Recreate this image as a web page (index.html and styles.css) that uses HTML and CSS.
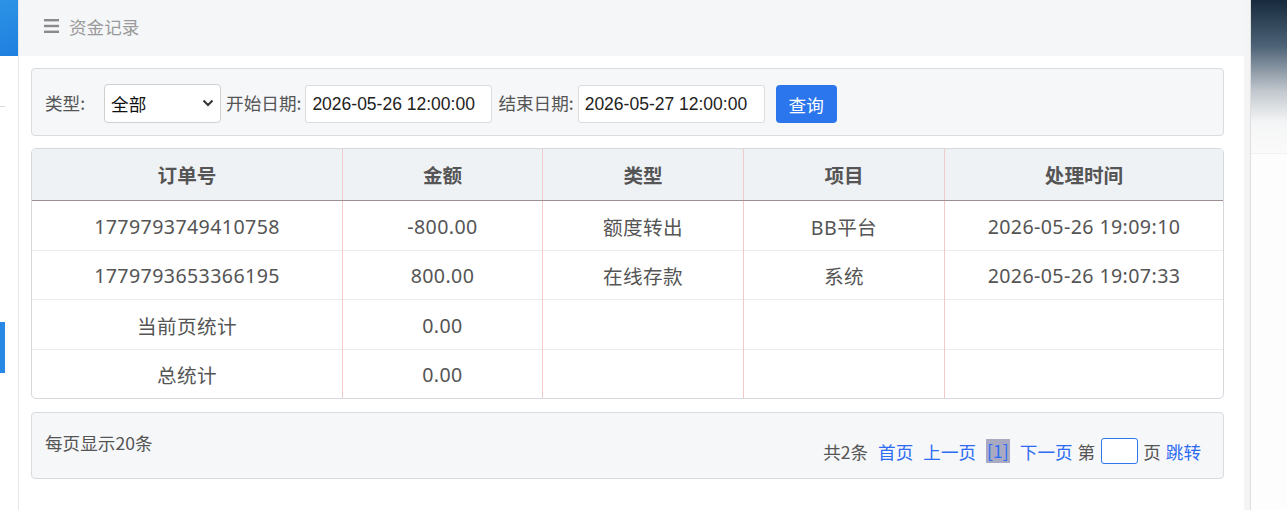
FILE: index.html
```html
<!DOCTYPE html>
<html>
<head>
    <title>资金记录</title>
    <link rel="stylesheet" href="styles.css">
</head>
<body>
    <div class="side">
        <div class="side-top"></div>
        <div class="side-line"></div>
        <div class="side-active"></div>
    </div>

    <div class="main">
        <div class="header">
            <svg class="menu-icon" width="15" height="14" viewBox="0 0 15 14">
                <rect x="0" y="0" width="15" height="2.4" fill="#8a8a8a"/>
                <rect x="0" y="5.8" width="15" height="2.4" fill="#8a8a8a"/>
                <rect x="0" y="11.6" width="15" height="2.4" fill="#8a8a8a"/>
            </svg>
            <span class="title">资金记录</span>
        </div>

        <div class="content">
            <div class="panel filter">
                <label class="lbl lbl-type">类型:</label>
                <div class="select-box">
                    <span>全部</span>
                    <svg width="12" height="8" viewBox="0 0 12 8"><path d="M1.5 1.5 L6 6 L10.5 1.5" fill="none" stroke="#333" stroke-width="2"/></svg>
                </div>
                <label class="lbl">开始日期:</label>
                <input class="date" type="text" value="2026-05-26 12:00:00">
                <label class="lbl">结束日期:</label>
                <input class="date" type="text" value="2026-05-27 12:00:00">
                <button class="btn">查询</button>
            </div>

            <div class="table-wrap">
                <table>
                    <thead>
                        <tr>
                            <th class="c1">订单号</th>
                            <th class="c2">金额</th>
                            <th class="c3">类型</th>
                            <th class="c4">项目</th>
                            <th class="c5">处理时间</th>
                        </tr>
                    </thead>
                    <tbody>
                        <tr>
                            <td>1779793749410758</td>
                            <td>-800.00</td>
                            <td>额度转出</td>
                            <td>BB平台</td>
                            <td>2026-05-26 19:09:10</td>
                        </tr>
                        <tr>
                            <td>1779793653366195</td>
                            <td>800.00</td>
                            <td>在线存款</td>
                            <td>系统</td>
                            <td>2026-05-26 19:07:33</td>
                        </tr>
                        <tr>
                            <td>当前页统计</td>
                            <td>0.00</td>
                            <td></td>
                            <td></td>
                            <td></td>
                        </tr>
                        <tr>
                            <td>总统计</td>
                            <td>0.00</td>
                            <td></td>
                            <td></td>
                            <td></td>
                        </tr>
                    </tbody>
                </table>
            </div>

            <div class="panel pager">
                <div class="per-page">每页显示20条</div>
                <div class="pages">
                    <span>共2条</span>
                    <a href="#">首页</a>
                    <a href="#">上一页</a>
                    <span class="cur">[1]</span>
                    <a href="#">下一页</a>
                    <span class="tight">第</span>
                    <input class="page-input" type="text">
                    <span class="tight">页</span>
                    <a href="#" class="tight">跳转</a>
                </div>
            </div>
        </div>
    </div>

    <div class="gutter"></div>
    <div class="rside">
        <div class="rside-top"></div>
    </div>
</body>
</html>
```

FILE: styles.css
```css
body {
    margin: 0;
    padding: 0;
    width: 1287px;
    height: 510px;
    display: flex;
    font-family: "Noto Sans", "Noto Sans CJK SC", sans-serif;
    background-color: #fff;
    overflow: hidden;
}

.side {
    width: 18px;
    flex-shrink: 0;
    border-right: 1px solid #e6e6e6;
    display: flex;
    flex-direction: column;
}

.side-top {
    height: 56px;
    background: linear-gradient(160deg, #2c93e6, #1f7fdf);
}

.side-line {
    width: 5px;
    height: 1px;
    background-color: #d8d8d8;
    margin-top: 50px;
}

.side-active {
    width: 5px;
    height: 51px;
    background-color: #2888e6;
    margin-top: 215px;
}

.main {
    width: 1225px;
    flex-shrink: 0;
}

.header {
    height: 56px;
    background-color: #f5f6f8;
    display: flex;
    align-items: center;
    padding-left: 25px;
}

.menu-icon {
    margin-right: 10px;
    margin-top: -5px;
}

.title {
    font-family: "Noto Sans CJK SC", sans-serif;
    font-size: 17.6px;
    color: #9a9a9a;
    margin-top: -3px;
}

.content {
    padding: 12px 20px 12px 12px;
}

.panel {
    background-color: #f6f7f9;
    border: 1px solid #d9dcdf;
    border-radius: 4px;
}

.filter {
    height: 66px;
    display: flex;
    align-items: center;
    padding-left: 13px;
    font-family: "Noto Sans CJK SC", sans-serif;
    font-size: 17.6px;
    color: #555;
}

.lbl {
    margin-right: 4px;
    white-space: nowrap;
}

.lbl-type {
    margin-right: 19px;
}

.select-box {
    width: 103px;
    height: 37px;
    border: 1px solid #cfcfcf;
    border-radius: 4px;
    background-color: #fff;
    display: flex;
    align-items: center;
    justify-content: space-between;
    padding: 0 6px;
    margin-right: 5px;
    margin-top: 2px;
    color: #111;
}

.date {
    width: 187px;
    height: 38px;
    box-sizing: border-box;
    border: 1px solid #dcdcdc;
    border-radius: 3px;
    padding: 0 6px;
    font-family: "Liberation Sans", Arial, sans-serif;
    font-size: 17.5px;
    color: #222;
    margin-right: 6px;
    margin-top: 4px;
    outline: none;
}

.btn {
    width: 61px;
    height: 38px;
    margin-left: 5px;
    margin-top: 4px;
    border: none;
    border-radius: 4px;
    background-color: #2b76ec;
    color: #fff;
    font-family: "Noto Sans CJK SC", sans-serif;
    font-size: 17.6px;
}

.table-wrap {
    margin-top: 12px;
    border: 1px solid #d5d9de;
    border-radius: 5px;
    overflow: hidden;
}

table {
    width: 100%;
    border-collapse: collapse;
    table-layout: fixed;
    font-size: 19.6px;
    letter-spacing: 0.4px;
    color: #555;
}

th {
    height: 51px;
    background-color: #eff2f5;
    font-weight: bold;
    border-bottom: 1px solid #9d9090;
    padding: 0;
    letter-spacing: 0;
}

td {
    height: 46.5px;
    text-align: center;
    border-top: 1px solid #ebebeb;
    padding: 2px 0 0 0;
}

tbody tr:first-child td {
    border-top: none;
}

th + th, td + td {
    border-left: 1px solid #f3caca;
}

.c1 { width: 310px; }
.c2 { width: 199px; }
.c3 { width: 200px; }
.c4 { width: 200px; }

.pager {
    margin-top: 13px;
    height: 65px;
    display: flex;
    justify-content: space-between;
    font-family: "Noto Sans CJK SC", sans-serif;
    font-size: 17.6px;
    color: #555;
}

.per-page {
    padding: 17px 0 0 13px;
}

.pages {
    display: flex;
    align-items: center;
    height: 26px;
    margin-top: 25px;
    padding-right: 22px;
}

.pages > * {
    margin-left: 10px;
}

.pages > .tight {
    margin-left: 5px;
}

.pages a {
    color: #2d6cf2;
    text-decoration: none;
}

.cur {
    background-color: #a9aac2;
    color: #2d6cf2;
    line-height: 24px;
    padding: 0 1px;
}

.page-input {
    width: 37px;
    height: 26px;
    box-sizing: border-box;
    border: 1px solid #2d76ec;
    border-radius: 3px;
    margin-left: 6px !important;
}

.gutter {
    width: 6px;
    flex-shrink: 0;
    background-color: #f4f4f4;
}

.rside {
    width: 36px;
    height: 510px;
    flex-shrink: 0;
    border-left: 1px solid #dedede;
    background-color: #fdfdfd;
}

.rside-top {
    height: 153px;
    border-bottom: 1px solid #f2f2f2;
    background: linear-gradient(to bottom, #172a3e, #4d6276 30%, #c3c9cf 60%, #f4f5f6 80%, #fafafa);
}
```
